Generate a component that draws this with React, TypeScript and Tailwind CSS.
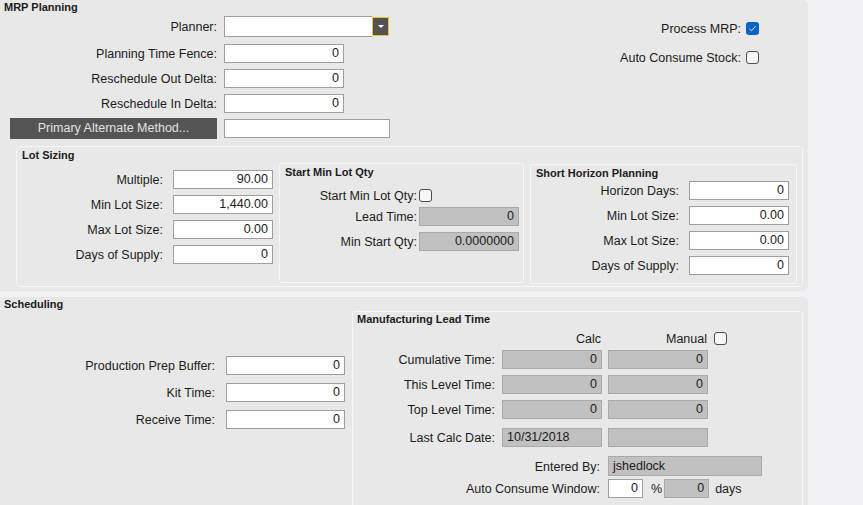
import React from 'react';

const font = "font-['Liberation_Sans',Arial,sans-serif]";

function Box({
  value = '',
  className = '',
  gray = false,
  left = false,
}: {
  value?: string;
  className?: string;
  gray?: boolean;
  left?: boolean;
}) {
  return (
    <div
      className={`h-[19px] border flex items-center text-[12.5px] leading-none ${
        gray ? 'bg-[#c0c0c0] border-[#a9a9a9]' : 'bg-white border-[#9e9e9e]'
      } ${left ? 'justify-start pl-[4px]' : 'justify-end pr-[4px]'} ${className}`}
    >
      {value}
    </div>
  );
}

function Check({ checked = false }: { checked?: boolean }) {
  return checked ? (
    <span className="w-[13px] h-[13px] rounded-[3px] bg-[#0b63c6] inline-flex items-center justify-center flex-none">
      <svg width="9" height="9" viewBox="0 0 9 9" fill="none">
        <path d="M1.5 4.8 L3.6 6.8 L7.6 2.2" stroke="#dce9fa" strokeWidth="1" />
      </svg>
    </span>
  ) : (
    <span className="inline-block w-[13px] h-[13px] rounded-[3px] bg-[#f7f7f7] border border-[#4d4d4d] flex-none" />
  );
}

function Row({
  label,
  labelW,
  gap,
  children,
  className = '',
}: {
  label: string;
  labelW: string;
  gap: string;
  children: React.ReactNode;
  className?: string;
}) {
  return (
    <div className={`flex items-center ${className}`}>
      <span className={`${labelW} ${gap} pt-[2px] text-right text-[12.5px] leading-none whitespace-nowrap flex-none`}>
        {label}
      </span>
      {children}
    </div>
  );
}

export default function App() {
  return (
    <div className={`w-[863px] h-[505px] overflow-hidden bg-[#f2f2f4] text-[#1b1b1b] ${font}`}>
      {/* MRP Planning */}
      <div className="w-[808px] h-[291px] bg-[#e8e8e8] rounded-r-[5px] flex flex-col">
        <div className="flex">
          <div className="w-[392px] flex flex-col">
            <div className="h-[16px] pl-[4px] pt-[1px] text-[11px] font-bold leading-[13px]">MRP Planning</div>
            <Row label="Planner:" labelW="w-[217px]" gap="mr-[7px]">
              <div className="w-[165px] h-[21px] flex">
                <div className="flex-1 bg-white border-y border-l border-[#9e9e9e]" />
                <div className="w-[17px] h-[19px] mt-[1px] bg-[#525252] border border-[#e3c442] flex items-center justify-center">
                  <span className="w-0 h-0 border-l-[3px] border-r-[3px] border-t-[3px] border-l-transparent border-r-transparent border-t-white" />
                </div>
              </div>
            </Row>
            <Row label="Planning Time Fence:" labelW="w-[217px]" gap="mr-[7px]" className="mt-[7px]">
              <Box value="0" className="w-[120px]" />
            </Row>
            <Row label="Reschedule Out Delta:" labelW="w-[217px]" gap="mr-[7px]" className="mt-[6px]">
              <Box value="0" className="w-[120px]" />
            </Row>
            <Row label="Reschedule In Delta:" labelW="w-[217px]" gap="mr-[7px]" className="mt-[6px]">
              <Box value="0" className="w-[120px]" />
            </Row>
            <div className="flex items-center mt-[5px]">
              <button className="ml-[10px] w-[207px] h-[21px] bg-[#545454] text-[#e2e2e2] text-[12.5px] leading-none">
                Primary Alternate Method...
              </button>
              <Box className="ml-[7px] w-[166px]" />
            </div>
          </div>
          <div className="flex-1 flex flex-col items-end pr-[49px] pt-[22px] gap-[16px]">
            <div className="flex items-center gap-[5px] text-[12.5px] leading-none h-[13px]">
              <span className="pt-[2px]">Process MRP:</span>
              <Check checked />
            </div>
            <div className="flex items-center gap-[5px] text-[12.5px] leading-none h-[13px]">
              <span className="pt-[2px]">Auto Consume Stock:</span>
              <Check />
            </div>
          </div>
        </div>

        {/* Lot Sizing */}
        <div className="ml-[16px] mt-[7px] w-[787px] h-[141px] border border-[#f6f6f6] rounded-[4px] flex flex-col">
          <div className="h-[16px] pl-[5px] pt-[2px] text-[11px] font-bold leading-[13px]">Lot Sizing</div>
          <div className="flex items-start">
            <div className="w-[262px] flex flex-col pt-[7px] gap-[6px]">
              <Row label="Multiple:" labelW="w-[146px]" gap="mr-[10px]">
                <Box value="90.00" className="w-[100px]" />
              </Row>
              <Row label="Min Lot Size:" labelW="w-[146px]" gap="mr-[10px]">
                <Box value="1,440.00" className="w-[100px]" />
              </Row>
              <Row label="Max Lot Size:" labelW="w-[146px]" gap="mr-[10px]">
                <Box value="0.00" className="w-[100px]" />
              </Row>
              <Row label="Days of Supply:" labelW="w-[146px]" gap="mr-[10px]">
                <Box value="0" className="w-[100px]" />
              </Row>
            </div>

            <div className="w-[245px] h-[120px] border border-[#f6f6f6] rounded-[3px] flex flex-col">
              <div className="h-[14px] pl-[5px] pt-[2px] text-[11px] font-bold leading-[13px]">Start Min Lot Qty</div>
              <Row label="Start Min Lot Qty:" labelW="w-[137px]" gap="mr-[2px]" className="mt-[11px] h-[13px]">
                <Check />
              </Row>
              <Row label="Lead Time:" labelW="w-[137px]" gap="mr-[2px]" className="mt-[5px]">
                <Box value="0" gray className="w-[100px]" />
              </Row>
              <Row label="Min Start Qty:" labelW="w-[137px]" gap="mr-[2px]" className="mt-[6px]">
                <Box value="0.0000000" gray className="w-[100px]" />
              </Row>
            </div>

            <div className="ml-[6px] mt-[1px] w-[267px] h-[120px] border border-[#f6f6f6] rounded-[3px] flex flex-col">
              <div className="h-[14px] pl-[5px] pt-[2px] text-[11px] font-bold leading-[13px]">Short Horizon Planning</div>
              <div className="flex flex-col mt-[2px] gap-[6px]">
                <Row label="Horizon Days:" labelW="w-[148px]" gap="mr-[10px]">
                  <Box value="0" className="w-[100px]" />
                </Row>
                <Row label="Min Lot Size:" labelW="w-[148px]" gap="mr-[10px]">
                  <Box value="0.00" className="w-[100px]" />
                </Row>
                <Row label="Max Lot Size:" labelW="w-[148px]" gap="mr-[10px]">
                  <Box value="0.00" className="w-[100px]" />
                </Row>
                <Row label="Days of Supply:" labelW="w-[148px]" gap="mr-[10px]">
                  <Box value="0" className="w-[100px]" />
                </Row>
              </div>
            </div>
          </div>
        </div>
      </div>

      {/* Scheduling */}
      <div className="mt-[6px] w-[808px] h-[208px] bg-[#e8e8e8] rounded-tr-[5px] flex flex-col">
        <div className="h-[14px] pl-[4px] pt-[1px] text-[11px] font-bold leading-[13px]">Scheduling</div>
        <div className="flex items-start">
          <div className="w-[352px] flex flex-col mt-[45px] gap-[8px]">
            <Row label="Production Prep Buffer:" labelW="w-[215px]" gap="mr-[11px]">
              <Box value="0" className="w-[119px]" />
            </Row>
            <Row label="Kit Time:" labelW="w-[215px]" gap="mr-[11px]">
              <Box value="0" className="w-[119px]" />
            </Row>
            <Row label="Receive Time:" labelW="w-[215px]" gap="mr-[11px]">
              <Box value="0" className="w-[119px]" />
            </Row>
          </div>

          <div className="w-[451px] h-[200px] border border-[#f6f6f6] rounded-[3px] flex flex-col">
            <div className="h-[14px] pl-[4px] pt-[1px] text-[11px] font-bold leading-[13px]">Manufacturing Lead Time</div>
            <div className="mt-[5px] h-[14px] flex items-center text-[12.5px] leading-none">
              <span className="ml-[149px] w-[100px] text-right pr-[1px] pt-[2px]">Calc</span>
              <span className="ml-[6px] w-[100px] text-right pr-[1px] pt-[2px]">Manual</span>
              <span className="ml-[6px] flex">
                <Check />
              </span>
            </div>
            <Row label="Cumulative Time:" labelW="w-[142px]" gap="mr-[7px]" className="mt-[5px]">
              <Box value="0" gray className="w-[100px]" />
              <Box value="0" gray className="ml-[6px] w-[100px]" />
            </Row>
            <Row label="This Level Time:" labelW="w-[142px]" gap="mr-[7px]" className="mt-[6px]">
              <Box value="0" gray className="w-[100px]" />
              <Box value="0" gray className="ml-[6px] w-[100px]" />
            </Row>
            <Row label="Top Level Time:" labelW="w-[142px]" gap="mr-[7px]" className="mt-[6px]">
              <Box value="0" gray className="w-[100px]" />
              <Box value="0" gray className="ml-[6px] w-[100px]" />
            </Row>
            <Row label="Last Calc Date:" labelW="w-[142px]" gap="mr-[7px]" className="mt-[9px]">
              <Box value="10/31/2018" gray left className="w-[100px]" />
              <Box gray className="ml-[6px] w-[100px]" />
            </Row>
            <Row label="Entered By:" labelW="w-[247px]" gap="mr-[8px]" className="mt-[9px]">
              <Box value="jshedlock" gray left className="w-[154px] h-[20px]" />
            </Row>
            <Row label="Auto Consume Window:" labelW="w-[247px]" gap="mr-[8px]" className="mt-[3px]">
              <Box value="0" className="w-[35px]" />
              <span className="ml-[8px] pt-[2px] text-[12.5px] leading-none">%</span>
              <Box value="0" gray className="ml-[2px] w-[45px]" />
              <span className="ml-[6px] pt-[2px] text-[12.5px] leading-none">days</span>
            </Row>
          </div>
        </div>
      </div>
    </div>
  );
}
